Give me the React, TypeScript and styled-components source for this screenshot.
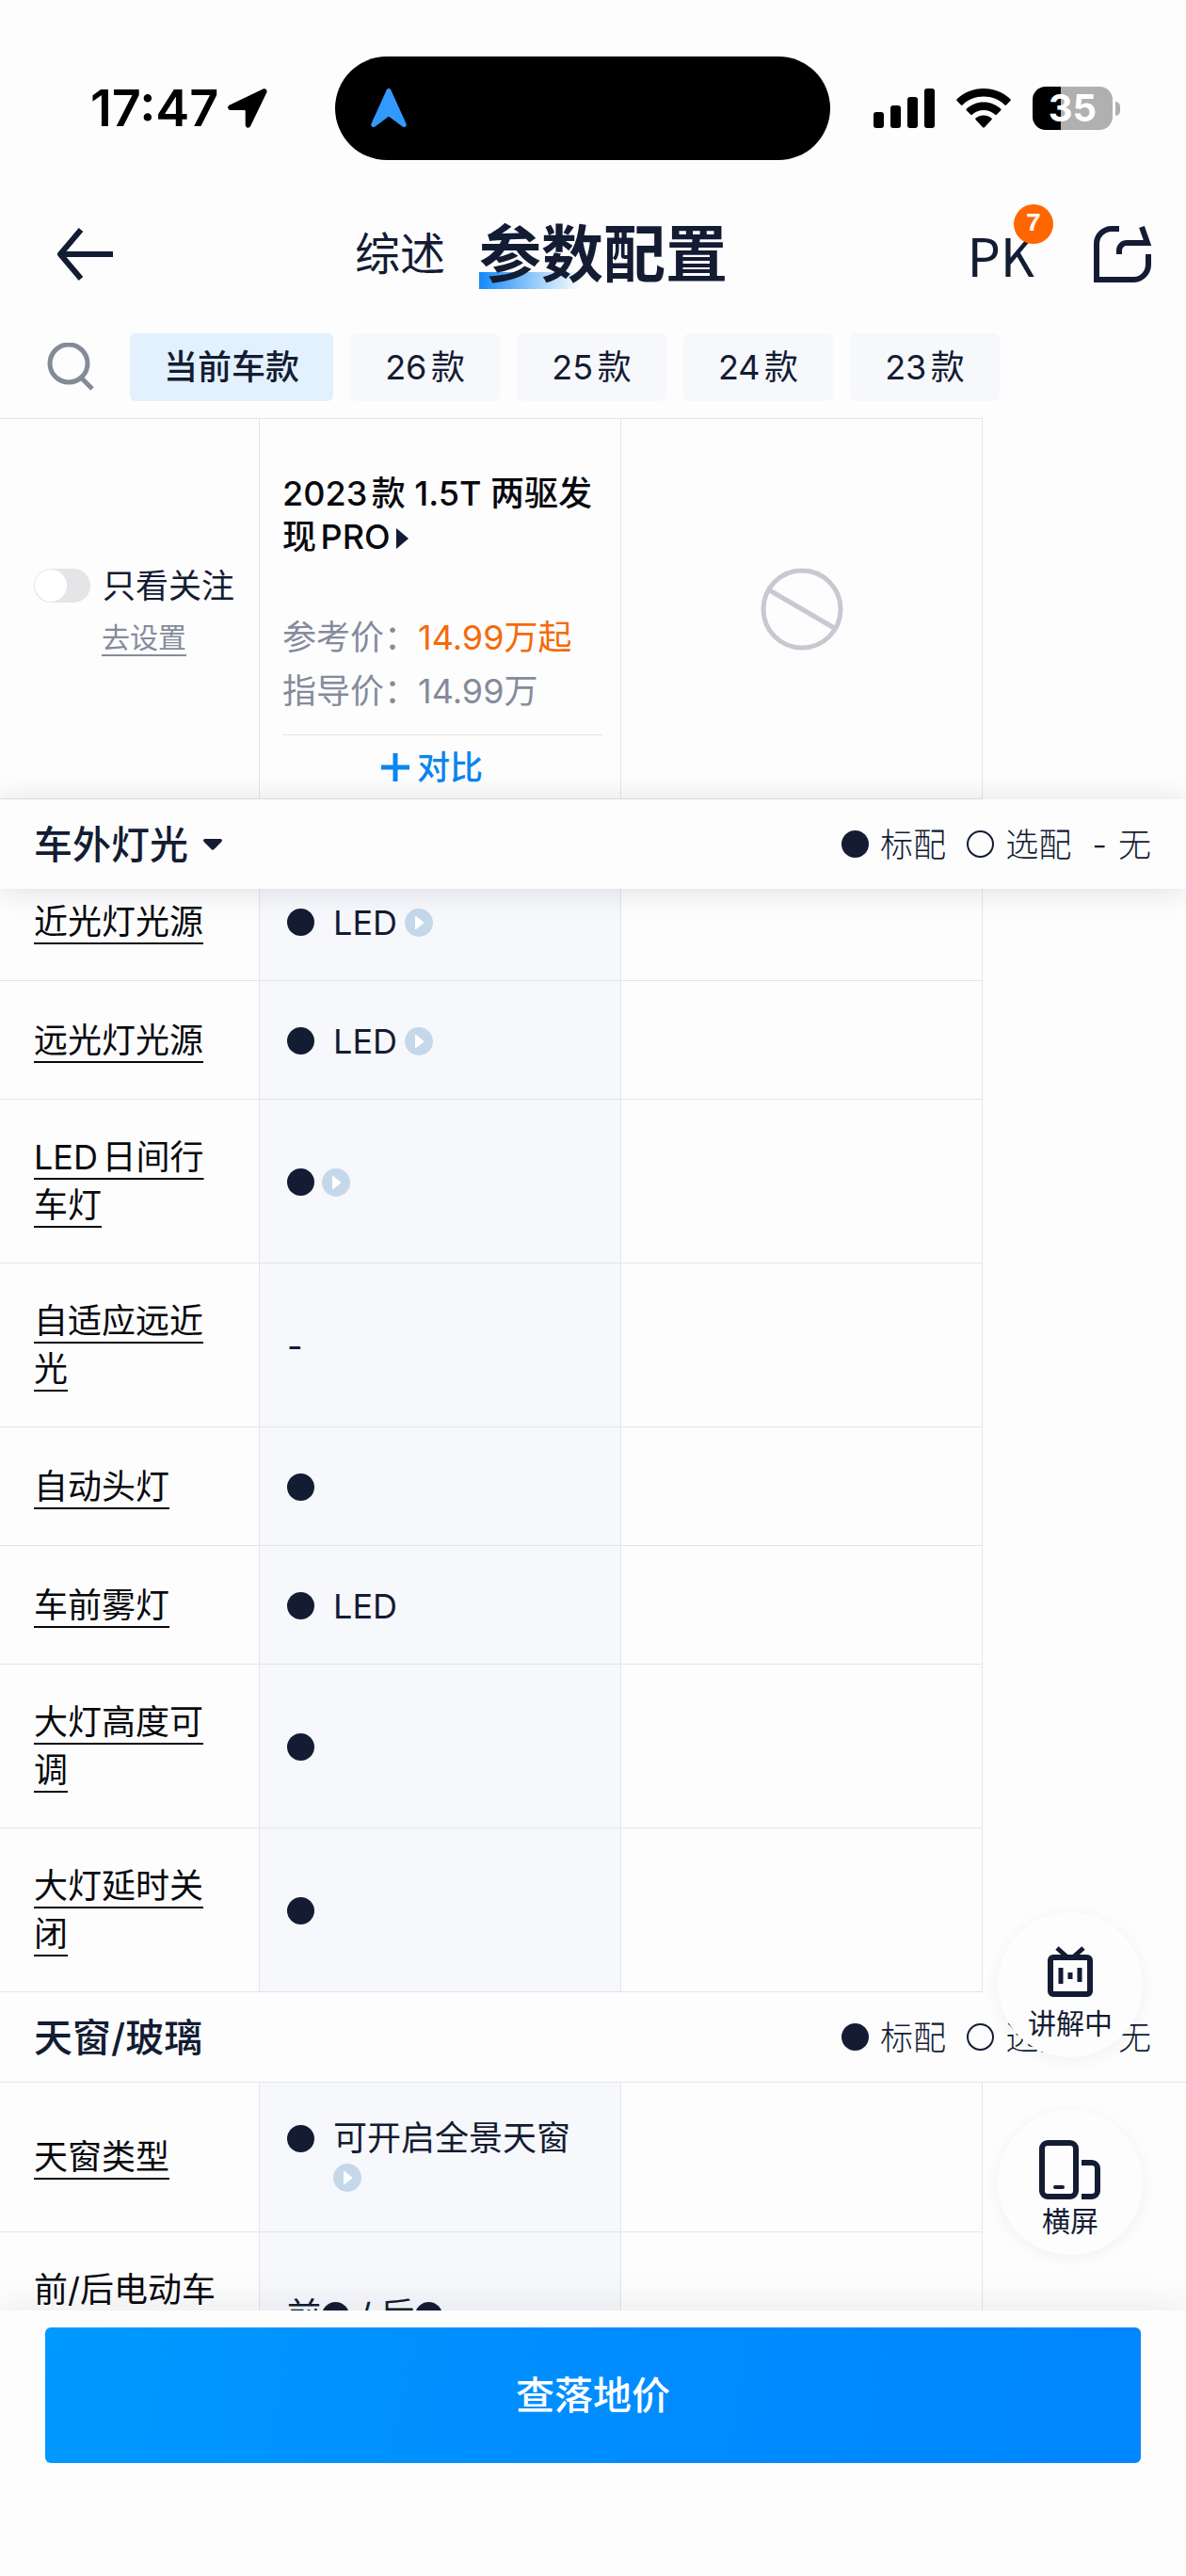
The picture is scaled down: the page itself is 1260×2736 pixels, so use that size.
import React, { useLayoutEffect, useRef, useState } from "react";
import styled, { createGlobalStyle } from "styled-components";

const ink = "#131c33";
const line = "#e4e5ea";
const surface = "#fdfdfe";
const blue = "#0a86ee";

const GlobalStyle = createGlobalStyle`
  * { box-sizing: border-box; }
  body {
    margin: 0;
    background: ${surface};
    color: ${ink};
    font-family: Inter, "Noto Sans CJK SC", sans-serif;
    font-size: 36px;
    line-height: 48px;
    text-autospace: normal;
  }
  button {
    padding: 0;
    border: 0;
    background: none;
    color: inherit;
    font: inherit;
    cursor: pointer;
  }
  svg { display: block; flex: none; }
`;

const Screen = styled.div`
  display: flex;
  flex-direction: column;
  height: 100vh;
  overflow: hidden;
`;

/* ---------- status bar ---------- */

const StatusBar = styled.div`
  display: flex;
  align-items: center;
  padding: 60px 70px 30px 96px;
  color: #000;
`;

const Clock = styled.span`
  font-size: 54px;
  font-weight: 600;
  line-height: 64px;
  margin-right: 10px;
`;

const Island = styled.div`
  display: flex;
  flex: 1;
  align-items: center;
  height: 110px;
  margin: 0 46px 0 72px;
  padding-left: 38px;
  border-radius: 55px;
  background: #000;
`;

const StatusIcons = styled.div`
  display: flex;
  align-items: center;
  gap: 23px;
`;

const Battery = styled.div`
  position: relative;
  display: flex;
  align-items: center;
  justify-content: center;
  width: 85px;
  height: 46px;
  margin-right: 8px;
  border-radius: 14px;
  background: linear-gradient(90deg, #000 35%, #b0b0b0 35%);
  color: #fff;
  font-size: 40px;
  font-weight: 700;
  line-height: 46px;

  &::after {
    content: "";
    position: absolute;
    right: -8px;
    width: 5px;
    height: 15px;
    border-radius: 0 5px 5px 0;
    background: #b0b0b0;
  }
`;

/* ---------- navigation ---------- */

const NavBar = styled.header`
  display: flex;
  align-items: center;
  height: 140px;
  padding: 0 37px 0 60px;
`;

const Tabs = styled.nav`
  display: flex;
  align-items: center;
  gap: 36px;
  margin-left: 256px;
`;

const Tab = styled.a<{ $active?: boolean }>`
  color: ${ink};
  text-decoration: none;
  font-size: ${(p) => (p.$active ? 66 : 48)}px;
  font-weight: ${(p) => (p.$active ? 700 : 400)};
  line-height: 74px;
  background: ${(p) =>
    p.$active
      ? "linear-gradient(100deg, #1286fb, #8fc8f8 50%, rgba(253, 253, 254, 0) 96%) left bottom / 112px 18px no-repeat"
      : "none"};
`;

const NavActions = styled.div`
  display: flex;
  align-items: center;
  gap: 62px;
  margin-left: auto;
`;

const PkButton = styled.button`
  position: relative;
  font-family: "Noto Sans CJK SC", sans-serif;
  font-size: 56px;
  line-height: 74px;
`;

const Badge = styled.span`
  position: absolute;
  top: -16px;
  right: -20px;
  width: 42px;
  height: 42px;
  border-radius: 50%;
  background: #ff6600;
  color: #fff;
  font-family: "Liberation Mono", monospace;
  font-size: 28px;
  font-weight: 700;
  line-height: 42px;
  text-align: center;
`;

/* ---------- model-year filter ---------- */

const FilterBar = styled.div`
  display: flex;
  align-items: center;
  gap: 18px;
  padding: 14px 36px 18px 50px;
`;

const SearchButton = styled.button`
  margin-right: 20px;
`;

const Chip = styled.button<{ $active?: boolean }>`
  height: 72px;
  min-width: 159px;
  padding: 0 36px;
  border-radius: 6px;
  background: ${(p) => (p.$active ? "#e2f1fd" : "#f7f8fc")};
  font-weight: ${(p) => (p.$active ? 500 : 400)};
  white-space: nowrap;
`;

/* ---------- comparison table ---------- */

const Table = styled.table`
  width: 82.86%;
  table-layout: fixed;
  border-collapse: separate;
  border-spacing: 0;
`;

const LabelCol = styled.col`
  width: 26.44%;
`;

const cellBorder = `
  border-right: 1px solid ${line};
  border-bottom: 1px solid ${line};
`;

const HeadTable = styled(Table)`
  border-top: 1px solid ${line};
`;

const HeadCell = styled.td<{ $pad?: string }>`
  ${cellBorder}
  padding: ${(p) => p.$pad ?? "0"};
  vertical-align: middle;
`;

const SwitchLabel = styled.label`
  display: flex;
  align-items: center;
  gap: 13px;
  height: 56px;
  margin-bottom: 5px;
  font-size: 35px;
  white-space: nowrap;
`;

const Switch = styled.input`
  appearance: none;
  flex: none;
  width: 60px;
  height: 36px;
  margin: 0;
  padding: 1px;
  border-radius: 18px;
  background: ${(p) => (p.checked ? blue : "#e5e5e7")};

  &::before {
    content: "";
    display: block;
    width: 34px;
    height: 34px;
    margin-left: ${(p) => (p.checked ? 24 : 0)}px;
    border-radius: 50%;
    background: #fff;
  }
`;

const SettingsLink = styled.a`
  display: block;
  margin-left: 72px;
  color: #858b9b;
  font-size: 30px;
  line-height: 44px;
  text-decoration: underline 2px;
  text-underline-offset: 7px;
`;

const CarName = styled.h1`
  margin: 0 0 56px;
  color: #08090d;
  font-size: 36px;
  font-weight: 500;
  line-height: 46px;
`;

const NameArrow = styled.svg`
  display: inline-block;
  margin-left: 6px;
`;

const Price = styled.p`
  margin: 0;
  color: #858b9b;
  line-height: 57px;
  text-autospace: no-autospace;
`;

const Highlight = styled.span`
  color: #f56a0a;
`;

const CompareButton = styled.button`
  display: flex;
  align-items: center;
  justify-content: center;
  gap: 8px;
  width: 100%;
  height: 68px;
  margin-top: 17px;
  padding-right: 22px;
  border-top: 1px solid ${line};
  color: ${blue};
  font-size: 35px;
  font-weight: 500;
`;

const NoneIcon = styled.svg`
  margin: 0 auto;
`;

const LabelCell = styled.th`
  ${cellBorder}
  height: 126px;
  padding: 36px 36px 35px;
  font-weight: 400;
  text-align: left;
  line-height: 51px;
`;

const ParamLink = styled.a`
  color: #08090d;
  text-decoration: underline 2px;
  text-decoration-skip-ink: none;
  text-underline-offset: 9px;
`;

const ValueCell = styled.td<{ $tinted?: boolean }>`
  ${cellBorder}
  padding: 38px 20px 36px 29px;
  background: ${(p) => (p.$tinted ? "#f7f8fc" : "transparent")};
  line-height: 42px;
`;

const Value = styled.div<{ $top?: boolean }>`
  display: flex;
  align-items: ${(p) => (p.$top ? "flex-start" : "center")};
  gap: 8px;
`;

const ValueText = styled.span`
  margin-left: 12px;
`;

const Dot = styled.span<{ $open?: boolean }>`
  display: inline-block;
  flex: none;
  width: 29px;
  height: 29px;
  border: ${(p) => (p.$open ? `2px solid ${ink}` : "0")};
  border-radius: 50%;
  background: ${(p) => (p.$open ? "transparent" : ink)};
`;

const LineDot = styled(Dot)`
  margin: 7px 0;
`;

const InlineDot = styled(Dot)`
  margin-left: 1px;
  vertical-align: -2px;
`;

const PlayMark = styled.svg`
  margin: 6px 0;
`;

/* ---------- section bars ---------- */

const SectionBar = styled.div<{ $floating?: boolean }>`
  position: relative;
  z-index: ${(p) => (p.$floating ? 1 : "auto")};
  display: flex;
  align-items: center;
  justify-content: space-between;
  height: ${(p) => (p.$floating ? 95 : 96)}px;
  padding: 0 37px 0 36px;
  background: ${surface};
  border-bottom: ${(p) => (p.$floating ? "0" : `1px solid ${line}`)};
  box-shadow: ${(p) => (p.$floating ? "0 2px 30px rgba(20, 20, 40, 0.13)" : "none")};
`;

const SectionTitle = styled.h2`
  display: flex;
  align-items: center;
  gap: 15px;
  margin: 0;
  font-size: 41px;
  font-weight: 500;
  line-height: 60px;
`;

const Legend = styled.div`
  display: flex;
  gap: 22px;
  font-size: 35px;
  font-weight: 300;
`;

const LegendItem = styled.span`
  display: flex;
  align-items: center;
  gap: 12px;
`;

/* ---------- scrolling area ---------- */

const Body = styled.div`
  position: relative;
  flex: 1;
  min-height: 0;
`;

const Scroller = styled.main`
  height: 100%;
  overflow-y: auto;
  scrollbar-width: none;
`;

const FloatStack = styled.div`
  position: absolute;
  right: 46px;
  bottom: 59px;
  display: flex;
  flex-direction: column;
  gap: 56px;
`;

const FloatButton = styled.button`
  display: flex;
  flex-direction: column;
  align-items: center;
  justify-content: flex-end;
  gap: 4px;
  width: 154px;
  height: 154px;
  padding-bottom: 18px;
  border-radius: 50%;
  background: ${surface};
  box-shadow: 0 3px 18px rgba(20, 20, 40, 0.05);
  font-size: 30px;
  line-height: 36px;
`;

const Footer = styled.footer`
  position: relative;
  padding: 18px 48px 120px;
  background: ${surface};
  box-shadow: 0 -4px 40px rgba(20, 20, 40, 0.08);
`;

const PriceButton = styled.button`
  width: 100%;
  height: 144px;
  border-radius: 6px;
  background: linear-gradient(100deg, #0099ff, #008cff 55%, #0086ff);
  color: #fff;
  font-size: 41px;
  font-weight: 500;
`;

/* ---------- drawings ---------- */

const PlayIcon = () => (
  <PlayMark width="30" height="30" viewBox="0 0 30 30" aria-hidden="true">
    <circle cx="15" cy="15" r="15" fill="#c5d8ea" />
    <path d="M11 8.5v13c0 .6.5.8 1 .5l8-6.200c.4-.4.4-1 0-1.400L12 8c-.5-.3-1-.1-1 .5z" fill="#fff" />
  </PlayMark>
);

const SignalIcon = () => (
  <svg width="65" height="42" viewBox="0 0 65 42" aria-hidden="true">
    <rect x="0" y="25" width="11" height="17" rx="3" />
    <rect x="18" y="18" width="11" height="24" rx="3" />
    <rect x="36" y="9" width="11" height="33" rx="3" />
    <rect x="54" y="0" width="11" height="42" rx="3" />
  </svg>
);

const WifiIcon = () => (
  <svg width="58" height="42" viewBox="0 0 58 42" aria-hidden="true">
    <path d="M29 0C18 0 8 4.200 .6 11.300c-.5.5-.5 1.200 0 1.700l4.300 4.400c.5.5 1.200.5 1.700 0C12.600 11.800 20.400 8.600 29 8.600s16.400 3.200 22.400 8.800c.5.5 1.200.5 1.700 0l4.300-4.400c.5-.5.5-1.200 0-1.700C50 4.200 40 0 29 0z" />
    <path d="M29 14.500c-7 0-13.400 2.700-18.200 7.100-.5.5-.5 1.200 0 1.700l4.400 4.500c.4.400 1.100.5 1.600 0 3.300-2.900 7.500-4.700 12.200-4.700s8.900 1.800 12.200 4.700c.5.5 1.200.4 1.600 0l4.400-4.500c.5-.5.5-1.200 0-1.700C42.400 17.200 36 14.500 29 14.500z" />
    <path d="M29 28.500c-3.200 0-6.100 1.200-8.400 3-.5.4-.5 1.200 0 1.700l7.500 8c.5.500 1.300.5 1.800 0l7.500-8c.5-.5.5-1.300 0-1.700-2.300-1.800-5.200-3-8.400-3z" />
  </svg>
);

/* ---------- data ---------- */

const years = ["26款", "25款", "24款", "23款"];

type Param = { label: string; value: React.ReactNode };

const lights: Param[] = [
  { label: "近光灯光源", value: <Value><Dot /><ValueText>LED</ValueText><PlayIcon /></Value> },
  { label: "远光灯光源", value: <Value><Dot /><ValueText>LED</ValueText><PlayIcon /></Value> },
  { label: "LED日间行车灯", value: <Value><Dot /><PlayIcon /></Value> },
  { label: "自适应远近光", value: "-" },
  { label: "自动头灯", value: <Value><Dot /></Value> },
  { label: "车前雾灯", value: <Value><Dot /><ValueText>LED</ValueText></Value> },
  { label: "大灯高度可调", value: <Value><Dot /></Value> },
  { label: "大灯延时关闭", value: <Value><Dot /></Value> },
];

const roof: Param[] = [
  {
    label: "天窗类型",
    value: (
      <Value $top>
        <LineDot />
        <ValueText>
          可开启全景天窗
          <PlayIcon />
        </ValueText>
      </Value>
    ),
  },
  { label: "前/后电动车窗", value: <>前<InlineDot /> / 后<InlineDot /></> },
];

const Columns = () => (
  <colgroup>
    <LabelCol />
    <col />
    <col />
  </colgroup>
);

const ParamTable = ({ rows }: { rows: Param[] }) => (
  <Table>
    <Columns />
    <tbody>
      {rows.map((row) => (
        <tr key={row.label}>
          <LabelCell scope="row">
            <ParamLink href="#">{row.label}</ParamLink>
          </LabelCell>
          <ValueCell $tinted>{row.value}</ValueCell>
          <ValueCell />
        </tr>
      ))}
    </tbody>
  </Table>
);

const SectionLegend = () => (
  <Legend>
    <LegendItem><Dot />标配</LegendItem>
    <LegendItem><Dot $open />选配</LegendItem>
    <LegendItem><span>-</span>无</LegendItem>
  </Legend>
);

export default function App() {
  const [onlyFollowed, setOnlyFollowed] = useState(false);
  const scroller = useRef<HTMLElement>(null);

  useLayoutEffect(() => {
    if (scroller.current) scroller.current.scrollTop = 28;
  }, []);

  return (
    <Screen lang="zh-CN">
      <GlobalStyle />
      <StatusBar>
        <Clock>17:47</Clock>
        <svg width="42" height="42" viewBox="0 0 42 42" aria-hidden="true">
          <path d="M37.500 .6 2 17.500c-3 1.500-2.300 5.500 1 5.500h14.500c.8 0 1.200.4 1.200 1.200V38.500c0 3.600 4 4.300 5.500 1.200L41.200 4.500C42.400 1.800 40.200-.7 37.500.6z" />
        </svg>
        <Island>
          <svg width="38" height="42" viewBox="0 0 38 42" aria-hidden="true">
            <path d="M16.500 2 .4 37.500c-1 2.600 1.800 4.700 4 3L17.800 30.500c.8-.6 1.600-.6 2.400 0L33.600 40.500c2.200 1.700 5-.4 4-3L21.500 2c-1-2.600-4-2.600-5 0z" fill="#3399ff" />
          </svg>
        </Island>
        <StatusIcons>
          <SignalIcon />
          <WifiIcon />
          <Battery>35</Battery>
        </StatusIcons>
      </StatusBar>

      <NavBar>
        <button aria-label="返回">
          <svg width="61" height="56" viewBox="0 0 61 56" fill="none" stroke={ink} strokeWidth="6" aria-hidden="true">
            <path d="M4 28H60M26 2 4 28l22 26" strokeLinejoin="round" />
          </svg>
        </button>
        <Tabs>
          <Tab href="#">综述</Tab>
          <Tab href="#" $active>参数配置</Tab>
        </Tabs>
        <NavActions>
          <PkButton>
            PK<Badge>7</Badge>
          </PkButton>
          <button aria-label="分享">
            <svg width="62" height="62" viewBox="0 0 62 62" fill="none" stroke={ink} strokeWidth="6" aria-hidden="true">
              <path d="M28 4H20A16 16 0 0 0 4 20V58H44A16 16 0 0 0 59 42V31" />
              <path d="M28 31V27A8 8 0 0 1 36 19H58L52 2" />
            </svg>
          </button>
        </NavActions>
      </NavBar>

      <FilterBar>
        <SearchButton aria-label="搜索">
          <svg width="50" height="52" viewBox="0 0 50 52" fill="none" stroke="#858a99" strokeWidth="5" aria-hidden="true">
            <circle cx="23" cy="22" r="20" />
            <path d="M36 37l12 12" />
          </svg>
        </SearchButton>
        <Chip $active>当前车款</Chip>
        {years.map((year) => (
          <Chip key={year}>{year}</Chip>
        ))}
      </FilterBar>

      <HeadTable>
        <Columns />
        <tbody>
          <tr>
            <HeadCell $pad="0 0 0 36px">
              <SwitchLabel>
                <Switch
                  type="checkbox"
                  role="switch"
                  checked={onlyFollowed}
                  onChange={(e) => setOnlyFollowed(e.target.checked)}
                />
                只看关注
              </SwitchLabel>
              <SettingsLink href="#">去设置</SettingsLink>
            </HeadCell>
            <HeadCell $pad="56px 19px 0 24px">
              <CarName>
                2023款 1.5T 两驱发现PRO
                <NameArrow width="13" height="22" viewBox="0 0 13 22" fill={ink} aria-hidden="true">
                  <path d="M0 0 13 11 0 22z" />
                </NameArrow>
              </CarName>
              <Price>参考价：<Highlight>14.99万起</Highlight></Price>
              <Price>指导价：14.99万</Price>
              <CompareButton>
                <svg width="30" height="30" viewBox="0 0 30 30" stroke={blue} strokeWidth="5" aria-hidden="true">
                  <path d="M15 0v30M0 15h30" />
                </svg>
                对比
              </CompareButton>
            </HeadCell>
            <HeadCell>
              <NoneIcon width="88" height="88" viewBox="0 0 88 88" fill="none" stroke="#c8c8d0" strokeWidth="5" aria-hidden="true">
                <circle cx="44" cy="44" r="41" />
                <path d="M8 23 80 65" />
              </NoneIcon>
            </HeadCell>
          </tr>
        </tbody>
      </HeadTable>

      <SectionBar $floating>
        <SectionTitle>
          车外灯光
          <svg width="22" height="12" viewBox="0 0 22 12" fill={ink} aria-hidden="true">
            <path d="M3 0H19c1.800 0 2.600 1.600 1.400 2.900L12.500 11c-.9 1-2.100 1-3 0L1.600 2.900C.4 1.600 1.200 0 3 0z" />
          </svg>
        </SectionTitle>
        <SectionLegend />
      </SectionBar>

      <Body>
        <Scroller ref={scroller}>
          <ParamTable rows={lights} />
          <SectionBar>
            <SectionTitle>天窗/玻璃</SectionTitle>
            <SectionLegend />
          </SectionBar>
          <ParamTable rows={roof} />
        </Scroller>
        <FloatStack>
          <FloatButton>
            <svg width="50" height="61" viewBox="0 0 50 61" fill="none" stroke={ink} strokeWidth="6" aria-hidden="true">
              <rect x="4" y="13" width="42" height="39" rx="3" />
              <path d="M11 3l10 9M39 3 29 12" strokeWidth="5" />
              <path d="M15 24v17M25 29v7M35 24v15" strokeWidth="5" />
            </svg>
            讲解中
          </FloatButton>
          <FloatButton>
            <svg width="68" height="64" viewBox="0 0 68 64" fill="none" stroke={ink} strokeWidth="6" aria-hidden="true">
              <rect x="4" y="3" width="36" height="57" rx="6" />
              <path d="M46 24h11a6 6 0 0 1 6 6v24a6 6 0 0 1-6 6H46" />
              <path d="M18 50h8" strokeWidth="4" strokeLinecap="round" />
            </svg>
            横屏
          </FloatButton>
        </FloatStack>
      </Body>

      <Footer>
        <PriceButton>查落地价</PriceButton>
      </Footer>
    </Screen>
  );
}
